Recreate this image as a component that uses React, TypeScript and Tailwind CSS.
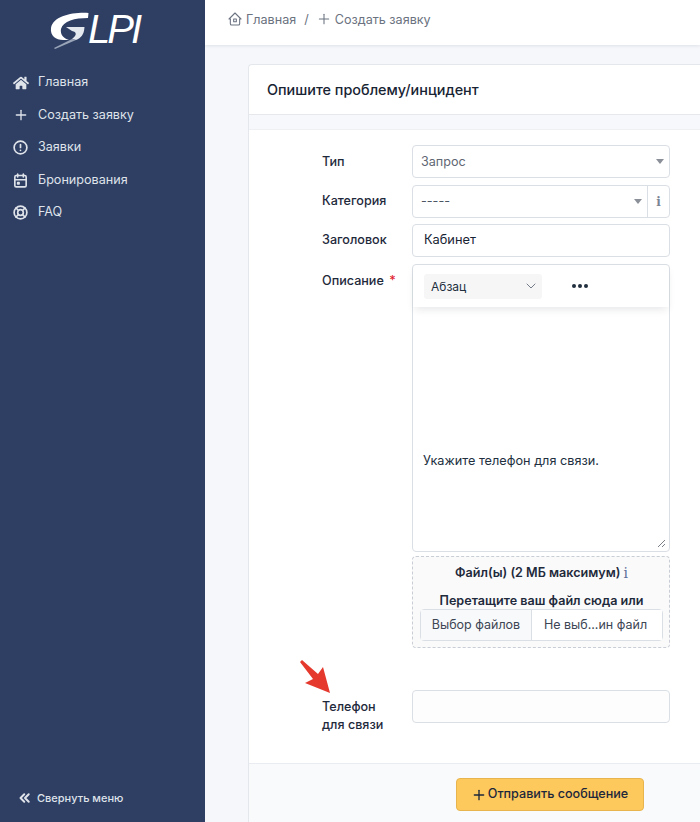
import React from 'react';
import { FaHome } from 'react-icons/fa';
import { TbAlertCircle, TbCalendarEvent, TbChevronDown, TbChevronsLeft, TbHome2, TbLifebuoy, TbPlus } from 'react-icons/tb';

const font = "font-['Inter','Liberation_Sans',sans-serif]";

const menuItems = [
  { label: 'Главная', icon: <FaHome size={16} /> },
  { label: 'Создать заявку', icon: <TbPlus size={16} strokeWidth={2} /> },
  { label: 'Заявки', icon: <TbAlertCircle size={17} strokeWidth={2.4} className="-ml-[0.5px]" /> },
  { label: 'Бронирования', icon: <TbCalendarEvent size={17} strokeWidth={2.3} className="-ml-[0.5px]" /> },
  { label: 'FAQ', icon: <TbLifebuoy size={17} strokeWidth={2.4} className="-ml-[0.5px]" /> },
];

const Caret = () => (
  <span className="block h-0 w-0 border-x-[4px] border-t-[5px] border-x-transparent border-t-[#8a8f98]" />
);

const Row: React.FC<{ label: React.ReactNode; className?: string; children: React.ReactNode }> = ({ label, className, children }) => (
  <div className={`flex ${className ?? ''}`}>
    <div className="w-[90px] shrink-0 text-[12.6px] leading-[18px] font-medium text-[#1e293b]">{label}</div>
    <div className="w-[258px] shrink-0">{children}</div>
  </div>
);

const Logo = () => (
  <div className="flex h-[52px] items-start pt-[8px] pl-[45px]">
    <svg width="46" height="44" viewBox="0 0 46 44" className="shrink-0">
      <path d="M43.5 5 C28 4 8 8 6 20 C5 28 11 32 18 32 L24 32 C18 30 15 26 16 21 C18 13 30 10 43 10 Z" fill="#ffffff" />
      <path d="M21 19 L39.5 19 C39 27 36 30 31 32 L27 31 C32 27 32 24 27 23 Z" fill="#e4e8ef" />
      <path d="M31 32 L10 41 L9 40 L27 31 Z" fill="#9aa5b8" />
    </svg>
    <span className="mt-[-1px] -ml-[3px] font-['Liberation_Sans',sans-serif] text-[40px] leading-[44px] tracking-[-3px] text-white italic">LPI</span>
  </div>
);

export default function App() {
  return (
    <div className={`flex h-[822px] w-[700px] overflow-hidden bg-[#f5f7fb] ${font}`}>
      <aside className="flex w-[205px] shrink-0 flex-col bg-[#2f3f64] text-[#dfe3ea]">
        <Logo />
        <nav className="mt-[14.5px] flex flex-col">
          {menuItems.map((item) => (
            <div key={item.label} className="flex h-[32.5px] items-center pl-[12.5px] text-[12.6px]">
              <span className="flex w-[25.5px] shrink-0">{item.icon}</span>
              <span>{item.label}</span>
            </div>
          ))}
        </nav>
        <div className="mt-auto mb-[15px] flex items-center pl-[16px] text-[11px] font-medium text-[#dfe3ea]">
          <TbChevronsLeft size={18} strokeWidth={2.6} className="mr-[3px]" />
          Свернуть меню
        </div>
      </aside>

      <div className="flex min-w-0 flex-1 flex-col">
        <header className="flex h-[45px] shrink-0 items-center bg-white pb-[4px] pl-[22px] text-[12.6px] text-[#6b7280] shadow-[0_1px_3px_rgba(30,41,59,0.1)]">
          <TbHome2 size={16} strokeWidth={1.6} className="mr-[3px] -mt-[3px]" />
          <span>Главная</span>
          <span className="mx-[8px]">/</span>
          <TbPlus size={16} strokeWidth={1.6} className="mr-[3px] -mt-[3px] -ml-[1px]" />
          <span>Создать заявку</span>
        </header>

        <main className="flex-1 overflow-hidden pt-[19px] pl-[43px]">
          <section className="flex h-[800px] w-[480px] flex-col rounded-tl-[4px] border-t border-l border-[#e4e7ec] bg-white">
            <div className="flex h-[50px] shrink-0 items-center border-b border-[#e6e8ec] pl-[18px] text-[14.4px] font-medium text-[#182433]">
              Опишите проблему/инцидент
            </div>
            <div className="h-[15px] shrink-0 border-b border-[#eef0f3] bg-[#f6f8fb]" />

            <div className="flex h-[633px] shrink-0 flex-col pt-[15px] pl-[73px]">
              <Row label={<span className="block pt-[8px]">Тип</span>}>
                <div className="flex h-[33px] items-center justify-between rounded-[4px] border border-[#dadfe5] bg-white pr-[5px] pl-[8px] text-[12.6px] text-[#5f6773]">
                  <span className="pt-[2px]">Запрос</span>
                  <Caret />
                </div>
              </Row>
              <Row className="mt-[7px]" label={<span className="block pt-[7px]">Категория</span>}>
                <div className="flex h-[33px] items-center rounded-[4px] border border-[#dadfe5] bg-white text-[12.6px] text-[#4b5563]">
                  <span className="flex-1 pl-[8px]">-----</span>
                  <span className="mr-[5px]"><Caret /></span>
                  <span className="flex h-full w-[22px] items-center justify-center border-l border-[#dadfe5] font-['DejaVu_Serif',serif] text-[12px] font-bold text-[#7c8594]">i</span>
                </div>
              </Row>
              <Row className="mt-[6px]" label={<span className="block pt-[7px]">Заголовок</span>}>
                <div className="flex h-[33px] items-center rounded-[4px] border border-[#dadfe5] bg-white pb-[1px] pl-[11px] text-[12.8px] text-[#182433]">
                  Кабинет
                </div>
              </Row>
              <Row
                className="mt-[7px]"
                label={
                  <span className="block pt-[8px]">
                    Описание <span className="ml-[2px] text-[#e11d2e]">*</span>
                  </span>
                }
              >
                <div className="relative flex h-[288px] flex-col rounded-[4px] border border-[#dadfe5] bg-white">
                  <div className="flex h-[42px] shrink-0 items-center pb-[1px] pl-[11px] shadow-[0_4px_8px_-2px_rgba(30,41,59,0.12)]">
                    <div className="mt-[1px] flex h-[25px] w-[118px] items-center justify-between rounded-[3px] bg-[#f6f6f7] pr-[3px] pl-[7px] text-[12px] text-[#222f3e]">
                      <span className="pt-[2px]">Абзац</span>
                      <TbChevronDown size={16} strokeWidth={1.4} className="text-[#6b7280]" />
                    </div>
                    <span className="ml-[30px] flex gap-[2px]">
                      <i className="h-[4px] w-[4px] rounded-full bg-[#222f3e]" />
                      <i className="h-[4px] w-[4px] rounded-full bg-[#222f3e]" />
                      <i className="h-[4px] w-[4px] rounded-full bg-[#222f3e]" />
                    </span>
                  </div>
                  <div className="pt-[144px] pl-[10px] text-[12.7px] text-[#222f3e]">Укажите телефон для связи.</div>
                  <svg width="9" height="9" viewBox="0 0 9 9" className="absolute right-[3px] bottom-[3px]">
                    <path d="M1 8 L8 1 M5 8 L8 5" stroke="#7b8088" strokeWidth="1" />
                  </svg>
                </div>
                <div className="mt-[4px] flex h-[92px] flex-col items-center rounded-[4px] border border-dashed border-[#c9ced6] bg-[#fafafa] pr-[6px] pl-[7px] text-[12.6px] font-semibold text-[#1f2a3c]">
                  <div className="mt-[7px] flex h-[18px] items-center">
                    Файл(ы) (2 МБ максимум)
                    <span className="ml-[3px] font-['DejaVu_Serif',serif] text-[14px] font-normal text-[#5f6f9a]">i</span>
                  </div>
                  <div className="mt-[10px] h-[17px] leading-[18px]">Перетащите ваш файл сюда или</div>
                  <div className="flex h-[32px] w-full rounded-[4px] border border-[#dadfe5] text-[12.5px] font-normal text-[#3d4654]">
                    <span className="flex w-[111px] items-center justify-center border-r border-[#dadfe5] bg-[#f8f9fb]">Выбор файлов</span>
                    <span className="flex flex-1 items-center justify-center bg-white pr-[3px]">Не выб...ин файл</span>
                  </div>
                </div>
              </Row>
              <Row
                className="mt-[42px]"
                label={
                  <span className="block pt-[8px] leading-[18px]">
                    Телефон
                    <br />
                    для связи
                  </span>
                }
              >
                <div className="h-[33px] rounded-[4px] border border-[#dadfe5] bg-[#fdfdfd]" />
              </Row>
            </div>

            <div className="flex-1 border-t border-[#e9ecf1] bg-[#f8fafc] pt-[14px] pl-[207px]">
              <div className="flex h-[33px] w-[188px] items-center justify-center rounded-[4px] border border-[#e8b44e] bg-[#fec95c] pr-[1px] text-[12.6px] font-medium text-[#1d273b]">
                <TbPlus size={16} strokeWidth={2} className="mr-[1px]" />
                Отправить сообщение
              </div>
            </div>
          </section>
        </main>
      </div>

      {/* arrow annotation drawn over the screenshot */}
      <svg width="36" height="38" viewBox="0 0 36 38" className="absolute top-[659px] left-[298px]">
        <path d="M2 3 L4 1 L20 15 L25 8 L32 34 L7 24 L15 20 Z" fill="#e5392d" />
      </svg>
    </div>
  );
}
